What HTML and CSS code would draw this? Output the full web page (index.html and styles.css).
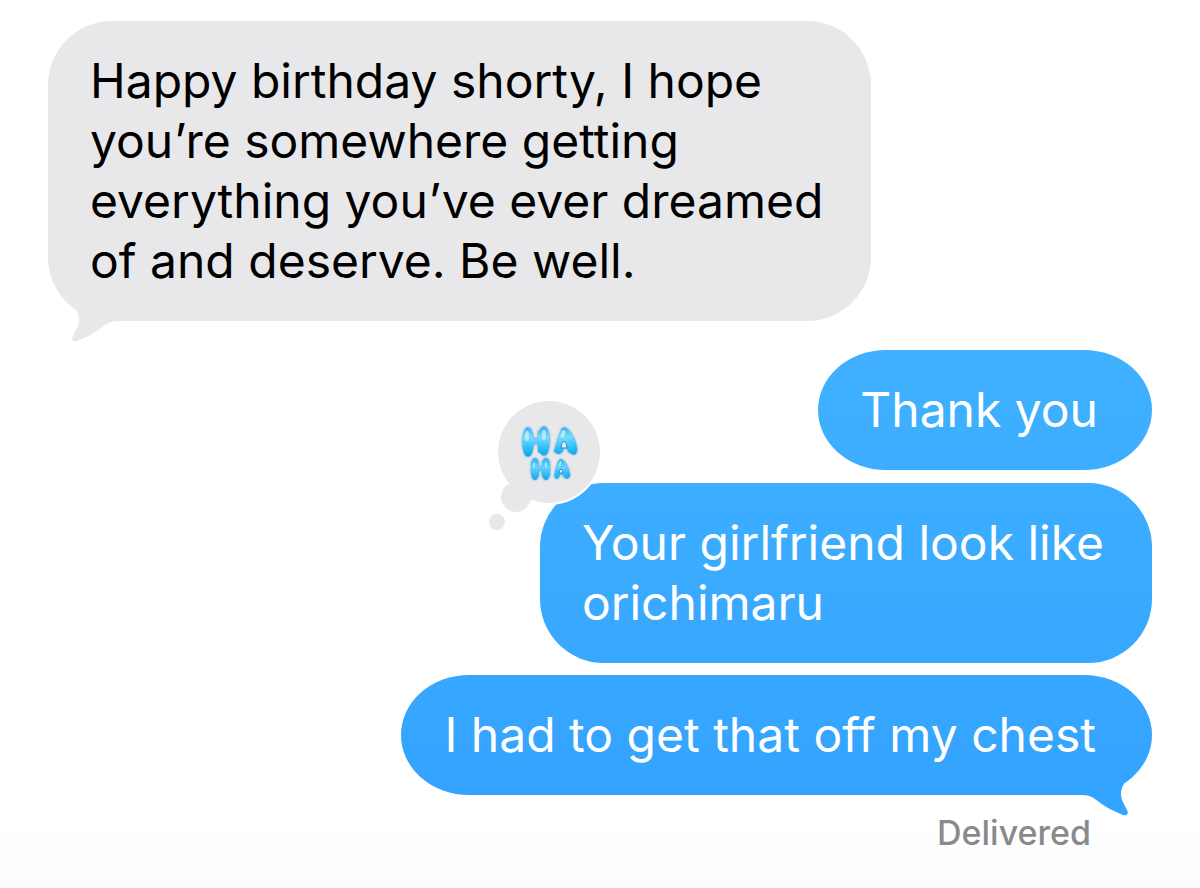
FILE: index.html
```html
<!DOCTYPE html>
<html lang="en">
<head>
<meta charset="utf-8">
<meta name="viewport" content="width=device-width, initial-scale=1">
<title>Messages</title>
<link rel="stylesheet" href="styles.css">
</head>
<body>
<main class="thread">
  <div class="bubble received">
    <p class="text">Happy birthday shorty, I hope<br>you’re somewhere getting<br>everything you’ve ever dreamed<br>of and deserve. Be well.</p>
    <svg class="tail" viewBox="0 0 50 42" aria-hidden="true"><path fill="#e8e8ea" d="M2 0C8 7 11 13 11 19C11 26 7 30 5 35C3 39 5 41 9 40C18 36 27 32 33 27C38 23 42 20 50 20V0Z"/></svg>
  </div>
  <div class="bubble sent first">
    <p class="text">Thank you</p>
  </div>
  <div class="bubble sent second">
    <p class="text">Your girlfriend look like<br>orichimaru</p>
    <svg class="reaction" viewBox="0 0 114 132" role="img" aria-label="Ha ha reaction">
      <defs>
        <linearGradient id="balloon" x1="0" y1="27" x2="0" y2="57" gradientUnits="userSpaceOnUse">
          <stop offset="0" stop-color="#37b3f2"/>
          <stop offset=".35" stop-color="#79dcff"/>
          <stop offset=".65" stop-color="#38c2fb"/>
          <stop offset="1" stop-color="#05a3f0"/>
        </linearGradient>
        <linearGradient id="balloon-small" x1="0" y1="58" x2="0" y2="81" gradientUnits="userSpaceOnUse">
          <stop offset="0" stop-color="#2fb0f2"/>
          <stop offset=".4" stop-color="#63d3ff"/>
          <stop offset="1" stop-color="#05a3f0"/>
        </linearGradient>
      </defs>
      <circle cx="61" cy="52" r="53" fill="#fff"/>
      <g fill="#e8e8ea"><circle cx="61" cy="52" r="51"/><circle cx="28" cy="97" r="15"/><circle cx="9" cy="122" r="8"/></g>
      <g class="laugh big">
        <ellipse cx="40" cy="42" rx="4" ry="13"/><ellipse cx="56" cy="41" rx="4" ry="13"/>
        <ellipse cx="74" cy="41" rx="3" ry="12" transform="rotate(17 74 41)"/><ellipse cx="81" cy="41" rx="4" ry="13" transform="rotate(-24 81 41)"/>
        <text x="37 67" y="51">HA</text>
      </g>
      <g class="laugh small">
        <ellipse cx="47" cy="69" rx="3" ry="10"/><ellipse cx="58" cy="69" rx="3" ry="10"/>
        <ellipse cx="71" cy="69" rx="2" ry="9" transform="rotate(17 71 69)"/><ellipse cx="76" cy="69" rx="3" ry="9" transform="rotate(-24 76 69)"/>
        <text x="45 67" y="76">HA</text>
      </g>
      <g fill="#e8e8ea" stroke="#1597dd">
        <path d="M76 41q3 2 3 7h-6q0-5 3-7Z"/>
        <path d="M73 69q2 1 2 4h-4q0-3 2-4Z"/>
      </g>
      <g fill="#d5f5ff" opacity=".7">
        <ellipse cx="39" cy="36" rx="2" ry="5"/><ellipse cx="56" cy="35" rx="2" ry="5"/><ellipse cx="75" cy="34" rx="2" ry="4" transform="rotate(17 75 34)"/>
        <ellipse cx="46" cy="65" rx="1" ry="3"/><ellipse cx="58" cy="65" rx="1" ry="3"/><ellipse cx="72" cy="64" rx="1" ry="3" transform="rotate(17 72 64)"/>
      </g>
    </svg>
  </div>
  <div class="bubble sent third">
    <p class="text">I had to get that off my chest</p>
    <svg class="tail" viewBox="0 0 50 42" aria-hidden="true"><path fill="#33a4ff" d="M48 0C42 7 39 13 39 19C39 26 43 30 45 35C47 39 45 41 41 40C32 36 23 32 17 27C12 23 8 20 0 20V0Z"/></svg>
  </div>
  <p class="status">Delivered</p>
</main>
</body>
</html>
```
FILE: styles.css
```css
body {
  margin: 0;
  background: #fff;
  font-family: Inter, "Liberation Sans", sans-serif;
}

.thread {
  box-sizing: border-box;
  min-height: 100vh;
  padding: 21px 48px 24px;
  display: flex;
  flex-direction: column;
  background: linear-gradient(#fff 92%, #fcfcfc);
}

.bubble {
  position: relative;
  box-sizing: border-box;
  padding: 30px 56px 30px 43px;
  border-radius: 68px / 60px;
}

.text {
  margin: 0;
  font-size: 48px;
  line-height: 60px;
}

.received {
  align-self: flex-start;
  padding: 30px 48px 30px 42px;
  border-radius: 64px;
  background: #e8e8ea;
  color: #000;
}

.sent {
  align-self: flex-end;
  margin-top: 13px;
  color: #fff;
}

.first {
  margin-top: 29px;
  padding: 30px 54px 30px 42px;
  background: linear-gradient(#40b0ff, #3daeff);
}

.second {
  padding: 30px 48px 30px 42px;
  border-radius: 64px;
  background: linear-gradient(#3cadff, #38a8ff);
}

.third {
  margin-top: 12px;
  background: linear-gradient(#37a7ff, #33a3ff);
}

.tail {
  position: absolute;
  bottom: -22px;
  width: 50px;
  height: 42px;
}

.received .tail {
  left: 20px;
}

.sent .tail {
  right: 20px;
}

.reaction {
  position: absolute;
  left: -52px;
  top: -83px;
  width: 114px;
  height: 132px;
}

.laugh {
  font-family: Inter, sans-serif;
  font-weight: 400;
  stroke-linejoin: round;
  filter: drop-shadow(0 0 1px #0d8ed8);
}

.big {
  font-size: 26px;
  fill: url(#balloon);
  stroke: url(#balloon);
  stroke-width: 3px;
}

.small {
  font-size: 18px;
  fill: url(#balloon-small);
  stroke: url(#balloon-small);
  stroke-width: 2px;
}

.status {
  align-self: flex-end;
  margin: 18px 61px 0 0;
  font-size: 34px;
  font-weight: 500;
  line-height: 40px;
  color: #8a8a8e;
}
```
